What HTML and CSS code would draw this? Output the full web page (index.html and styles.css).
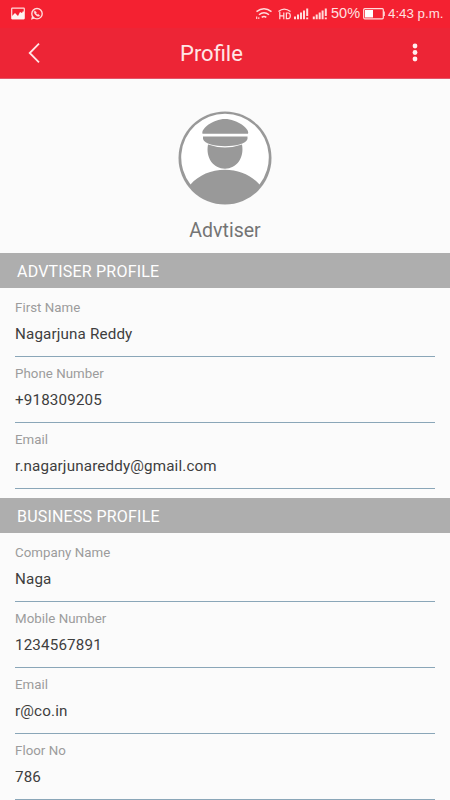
FILE: index.html
```html
<!DOCTYPE html>
<html lang="en">
<head>
<meta charset="utf-8">
<title>Profile</title>
<link rel="stylesheet" href="styles.css">
</head>
<body>
<div class="status">
  <svg class="notif" width="34" height="14" viewBox="0 0 34 14" fill="none">
    <rect x=".7" y="1.2" width="12.6" height="10.6" rx=".5" stroke="#ffdcdc" stroke-width="1.2"/>
    <path d="M1 12V9l3-3 3 3 2-4 2 1 1-2 1 1v7z" fill="#fff3f1"/>
    <circle cx="26" cy="6.7" r="5.2" stroke="#ffdcdc" stroke-width="1.4"/>
    <path d="M20 12.700l1.200-4.200 2.600 3z" fill="#ffdcdc"/>
    <path d="M23.7 3.700c-1.100 1-.5 2.800.9 4.200s3.200 2 4.200.8l-1.500-1.500-.9.600-1.500-1.600.6-.9z" fill="#ffdcdc" stroke="#ffdcdc" stroke-width=".4"/>
  </svg>
  <div class="status-right">
    <svg class="signals" width="72" height="14" viewBox="0 0 72 14" fill="none" stroke="#ffdcdc">
      <path d="M.5 4.600Q8-1.200 15.500 4.600M3 7.800Q8 3.600 13 7.800M5.700 10.400Q8 8.600 10.300 10.400" stroke-width="1.500"/>
      <path d="M.7 9.500v2.500M2.800 10.300v1.700" stroke-width="1.100"/>
      <path d="M22.500 4.500Q28-.2 34.500 4.500" stroke-width="1.400"/>
      <path d="M23.800 4.800v7.400M27.800 5.500v6.700M23.800 8.800h4M30.400 6v5.700h1.700q2.200 0 2.200-2.850t-2.200-2.850z" stroke-width="1.200"/>
      <g stroke-width="2">
        <path d="M39 9.500v2.700M42 7.500v4.700M45 5.500v6.700M48 3.500v8.700M51.200 1.500v7.500M51.200 10.500v1.700"/>
        <path d="M57.800 9.500v2.700M60.700 7.500v4.700M63.700 5.500v6.700M66.600 3.500v8.700M69.800 1.500v7.500M69.800 10.500v1.700"/>
      </g>
    </svg>
    <span class="percent">50%</span>
    <svg class="battery" width="23" height="12" viewBox="0 0 23 12">
      <rect x=".7" y=".7" width="19.600" height="10.100" rx="1" fill="none" stroke="#ffdcdc" stroke-width="1.200"/>
      <rect x="2" y="2" width="8" height="7.500" fill="#fff"/>
      <rect x="20.500" y="3.500" width="1.300" height="4.500" fill="#ffdcdc"/>
    </svg>
    <span class="clock">4:43 p.m.</span>
  </div>
</div>
<header class="appbar">
  <svg class="back" width="14" height="22" viewBox="0 0 14 22" fill="none" stroke="#ffe6e6" stroke-width="1.800"><path d="M11 1.700L1.700 11 11 20.300"/></svg>
  <h1 class="title">Profile</h1>
  <svg class="more" width="6" height="20" viewBox="0 0 6 20" fill="#ffeeee"><circle cx="3" cy="3" r="2.400"/><circle cx="3" cy="9.500" r="2.400"/><circle cx="3" cy="16" r="2.400"/></svg>
</header>
<main>
  <section class="identity">
    <svg width="94" height="94" viewBox="0 0 94 94">
      <circle cx="47" cy="47" r="46.500" fill="#999"/>
      <path d="M12.500 73.500A43.800 43.800 0 1 1 81.500 73.500C73 64 61 58.800 47 58.800S21 64 12.500 73.500z" fill="#fff"/>
      <path d="M24.500 22.700C22.500 18 35 8 47 8s25 10 23 14.700z" fill="#999"/>
      <path d="M25 25.500H69.500V28C68 32.800 57 35.200 47 35.200S26.500 32.800 25 28z" fill="#999"/>
      <path d="M30 33.500Q47 39.500 64 33.500C66.500 47 58.500 57.700 47 57.700S27.500 47 30 33.500z" fill="#999"/>
    </svg>
    <p class="name">Advtiser</p>
  </section>
  <section>
    <h2 class="bar">ADVTISER PROFILE</h2>
    <dl class="fields">
      <div class="field"><dt>First Name</dt><dd>Nagarjuna Reddy</dd></div>
      <div class="field"><dt>Phone Number</dt><dd>+918309205</dd></div>
      <div class="field"><dt>Email</dt><dd>r.nagarjunareddy@gmail.com</dd></div>
    </dl>
  </section>
  <section>
    <h2 class="bar">BUSINESS PROFILE</h2>
    <dl class="fields">
      <div class="field"><dt>Company Name</dt><dd>Naga</dd></div>
      <div class="field"><dt>Mobile Number</dt><dd>1234567891</dd></div>
      <div class="field"><dt>Email</dt><dd>r@co.in</dd></div>
      <div class="field"><dt>Floor No</dt><dd>786</dd></div>
    </dl>
  </section>
</main>
</body>
</html>
```

FILE: styles.css
```css
* { box-sizing: border-box; margin: 0; padding: 0; }
body {
  height: 800px;
  overflow: hidden;
  background: #fbfbfb;
  font-family: Roboto, "Liberation Sans", sans-serif;
}
svg { display: block; flex: none; }
.status {
  display: flex;
  justify-content: space-between;
  height: 28px;
  padding: 0 7px 0 11px;
  background: #f42131;
  color: #ffe0e0;
}
.notif { margin-top: 7px; }
.status-right {
  display: flex;
  align-items: center;
  height: 27px;
  font: 13.3px/27px "Liberation Sans", sans-serif;
  white-space: nowrap;
}
.percent { width: 29px; margin-left: 3px; margin-right: 3px; font-size: 14.5px; }
.clock { width: 55px; margin-left: 2px; }
.appbar {
  display: flex;
  align-items: center;
  height: 51px;
  padding: 0 32px 0 28px;
  background: #ed2536;
  border-bottom: 1px solid #e3556a;
}
.title {
  margin-left: 138px;
  margin-right: auto;
  color: #ffe6e6;
  font-size: 22px;
  font-weight: 400;
}
.identity {
  display: flex;
  flex-direction: column;
  align-items: center;
  height: 174px;
  padding-top: 32px;
}
.name {
  margin-top: 14px;
  color: #747474;
  font-size: 19.5px;
  line-height: 24px;
}
.bar {
  height: 35px;
  padding-left: 17px;
  background: #aeaeae;
  color: #fff;
  font-size: 16px;
  font-weight: 400;
  line-height: 37px;
  letter-spacing: .2px;
}
.fields { height: 210px; padding: 2.700px 15px 0; }
.field {
  height: 66.200px;
  padding-top: 8px;
  border-bottom: 1px solid #8aa6b8;
}
dt { color: #9c9c9c; font-size: 13.300px; line-height: 17px; letter-spacing: .03px; }
dd { margin-top: 9px; color: #3e3e3e; font-size: 15.200px; line-height: 19px; letter-spacing: .15px; }
```
